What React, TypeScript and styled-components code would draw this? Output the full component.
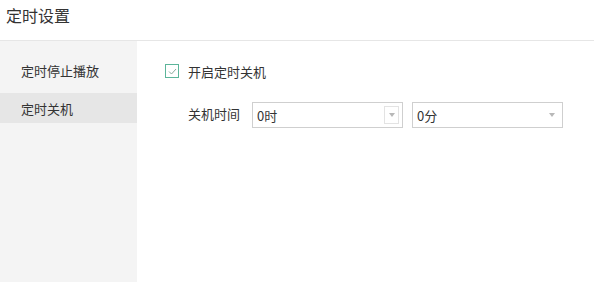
import styled, { createGlobalStyle } from "styled-components";

const GlobalStyle = createGlobalStyle`
  html, body {
    margin: 0;
    padding: 0;
    background: #fff;
    font-family: "Noto Sans CJK SC", "Liberation Sans", sans-serif;
    color: #333;
  }
`;

const Page = styled.div`
  width: 594px;
  height: 282px;
  display: flex;
  flex-direction: column;
  overflow: hidden;
`;

const Header = styled.div`
  height: 41px;
  box-sizing: border-box;
  border-bottom: 1px solid #e6e6e6;
  padding-left: 6px;
  display: flex;
  align-items: center;
  font-size: 16px;
  padding-bottom: 11px;
`;

const Body = styled.div`
  flex: 1;
  display: flex;
`;

const Sidebar = styled.div`
  width: 137px;
  background: #f4f4f4;
  padding-top: 14px;
  display: flex;
  flex-direction: column;
  gap: 8px;
`;

const NavItem = styled.div<{ $active?: boolean }>`
  height: 30px;
  display: flex;
  align-items: center;
  padding-left: 21px;
  font-size: 13px;
  background: ${(p) => (p.$active ? "#e6e6e6" : "transparent")};
`;

const Content = styled.div`
  flex: 1;
  padding: 22px 0 0 28px;
  display: flex;
  flex-direction: column;
`;

const CheckRow = styled.label`
  display: flex;
  align-items: center;
  gap: 9px;
  font-size: 13px;
  height: 16px;
`;

const CheckBox = styled.span`
  width: 14px;
  height: 14px;
  box-sizing: border-box;
  border: 1px solid #5cb59a;
  display: flex;
  align-items: center;
  justify-content: center;
`;

const TimeRow = styled.div`
  display: flex;
  align-items: center;
  margin-top: 23px;
  padding-left: 23px;
`;

const Label = styled.span`
  font-size: 13px;
  margin-right: 12px;
  margin-top: -3px;
`;

const Select = styled.div`
  width: 151px;
  height: 26px;
  box-sizing: border-box;
  border: 1px solid #cfcfcf;
  display: flex;
  align-items: center;
  justify-content: space-between;
  padding: 0 3px 0 4px;
  font-size: 13px;
  & + & {
    margin-left: 9px;
  }
`;

const Arrow = styled.span<{ $boxed?: boolean }>`
  width: 15px;
  height: 18px;
  box-sizing: border-box;
  border: 1px solid ${(p) => (p.$boxed ? "#e3e3e3" : "transparent")};
  display: flex;
  align-items: center;
  justify-content: center;
  &::after {
    content: "";
    border-left: 3.5px solid transparent;
    border-right: 3.5px solid transparent;
    border-top: 4px solid #b8b8b8;
  }
`;

export default function App() {
  return (
    <Page>
      <GlobalStyle />
      <Header>定时设置</Header>
      <Body>
        <Sidebar>
          <NavItem>定时停止播放</NavItem>
          <NavItem $active>定时关机</NavItem>
        </Sidebar>
        <Content>
          <CheckRow>
            <CheckBox>
              <svg width="9" height="7" viewBox="0 0 9 7">
                <path d="M1 3.5 L3.5 6 L8 1" fill="none" stroke="#8aaa9c" strokeWidth="1" />
              </svg>
            </CheckBox>
            开启定时关机
          </CheckRow>
          <TimeRow>
            <Label>关机时间</Label>
            <Select>
              0时
              <Arrow $boxed />
            </Select>
            <Select>
              0分
              <Arrow />
            </Select>
          </TimeRow>
        </Content>
      </Body>
    </Page>
  );
}
